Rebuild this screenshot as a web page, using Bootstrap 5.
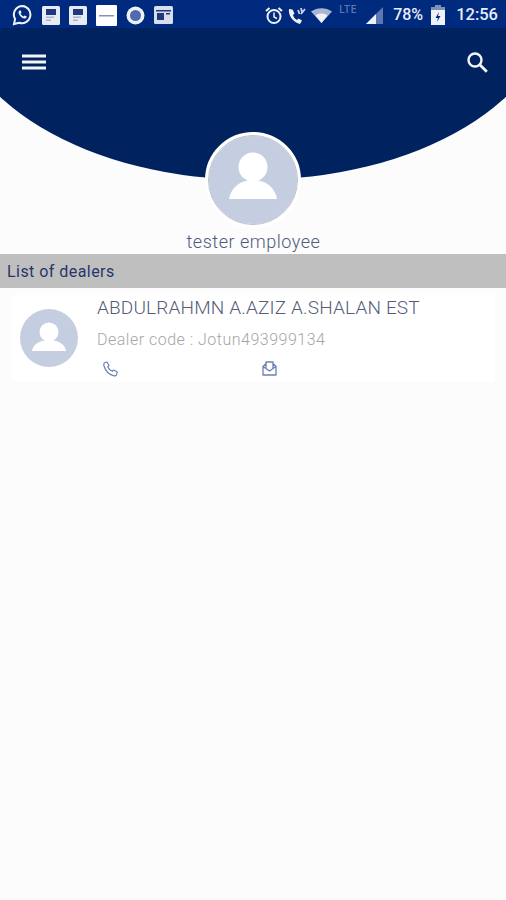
<!DOCTYPE html>
<html lang="en">
<head>
<meta charset="utf-8">
<title>Dealers</title>
<link rel="stylesheet" href="https://cdn.jsdelivr.net/npm/bootstrap@5.3.0/dist/css/bootstrap.min.css">
<style>
html,body{background:#fcfcfc;font-family:Roboto,"Liberation Sans",sans-serif;}
.screen{width:506px;height:900px;overflow:hidden;background:#fcfcfc;}
.hero{height:180px;overflow:hidden;display:grid;grid-template-columns:506px;}
.hero>*{grid-area:1/1;align-self:start;}
.arc{width:600px;height:360px;margin-left:-47px;margin-top:-180px;background:#00225f;border-radius:50%;}
.topbar{height:28px;background:#002a7e;padding:2px 8px 0 12px;color:#e8edf7;}
.topbar svg{display:block;flex:none;}
.sb-left{gap:9px;}
.lte-tag{font-size:10px;font-weight:500;color:#5d78b0;width:22px;margin:-10px 5px 0 7px;letter-spacing:.6px;line-height:12px;}
.sb-pct{font-size:16px;font-weight:500;margin-left:10px;margin-right:8px;}
.sb-time{font-size:16.5px;font-weight:500;margin-left:11px;}
.toolbar{height:68px;padding:0 17px 0 21px;margin-top:28px;}
.avatar-big{width:96px;height:96px;border-radius:50%;background:#c5cee0;border:4px solid #fff;outline:1px solid #b9bfcc;outline-offset:-4px;margin:-48px auto 0;position:relative;overflow:hidden;}
.who{font-size:18px;font-weight:300;line-height:22px;color:#4f5a7c;letter-spacing:.52px;text-align:center;margin-top:3px;height:23px;padding-left:1px;}
.sect{height:34px;background:#bfbfbf;color:#27356c;font-size:16px;line-height:36px;padding-left:7px;letter-spacing:.45px;}
.dealer{margin:7px 11px 0 12px;height:87px;background:#fff;}
.avatar-small{width:58px;height:58px;border-radius:50%;background:#c5cee0;margin:14px 19px 0 8px;flex:none;overflow:hidden;}
.d-name{font-size:19px;font-weight:300;color:#555d78;line-height:24px;margin-top:1px;letter-spacing:.16px;white-space:nowrap;}
.d-code{font-size:16px;font-weight:300;color:#a6a6a6;line-height:22px;margin-top:9px;letter-spacing:.5px;white-space:nowrap;}
.d-icons{margin-top:10px;padding-left:6px;}
.d-icons svg{display:block;}
.gap-ic{width:143px;}
</style>
</head>
<body>
<div class="screen">
  <div class="hero">
    <div class="arc"></div>
    <div class="topbar d-flex align-items-center justify-content-between">
      <div class="d-flex align-items-center sb-left">
        <svg width="21" height="22" viewBox="0 0 21 22"><path d="M10.500 2a8.600 8.600 0 0 0-7.400 13L2 20l5-1.300A8.600 8.600 0 1 0 10.500 2z" fill="none" stroke="#eef1f8" stroke-width="2"/><path d="M7.500 6.500c-1.500 1-1.200 3 .3 5s3.700 3.500 5.400 3c1.200-.4 1.700-1.400 1.500-2l-2.100-1.100-1 1c-1.200-.4-2.600-1.800-3-3l.9-1-1-2.100z" fill="#eef1f8"/></svg>
        <svg width="18" height="19" viewBox="0 0 18 19"><rect width="18" height="19" rx="1.500" fill="#e8ebf3"/><rect x="4" y="3" width="10" height="6" fill="#1f3a7c"/><rect x="4" y="10.500" width="8" height="1.500" fill="#a9b3cc"/><rect x="4" y="13.500" width="5" height="1.500" fill="#a9b3cc"/></svg>
        <svg width="18" height="19" viewBox="0 0 18 19"><rect width="18" height="19" rx="1.500" fill="#e8ebf3"/><rect x="4" y="3" width="10" height="6" fill="#1f3a7c"/><rect x="4" y="10.500" width="8" height="1.500" fill="#a9b3cc"/><rect x="4" y="13.500" width="5" height="1.500" fill="#a9b3cc"/></svg>
        <svg width="21" height="21" viewBox="0 0 21 21"><rect width="21" height="21" rx="1" fill="#fff"/><rect x="3" y="10" width="15" height="1.500" fill="#8493b8"/></svg>
        <svg width="19" height="19" viewBox="0 0 19 19"><circle cx="9.500" cy="9.500" r="9" fill="#eef1f8"/><circle cx="9.500" cy="9.500" r="5.500" fill="#4f6bab"/></svg>
        <svg width="19" height="18" viewBox="0 0 19 18"><rect width="19" height="18" rx="1.500" fill="#d9deea"/><rect x="2" y="4" width="15" height="1.500" fill="#1f3a7c"/><rect x="3" y="7" width="7" height="7" fill="#1f3a7c"/><rect x="12" y="7" width="4" height="1.500" fill="#1f3a7c"/></svg>
      </div>
      <div class="d-flex align-items-center">
        <svg width="18" height="19" viewBox="0 0 18 19"><circle cx="9" cy="10.500" r="6.500" fill="none" stroke="#eef1f8" stroke-width="2"/><path d="M9 6.500V11l3 1.500" fill="none" stroke="#eef1f8" stroke-width="1.500"/><path d="M1 5l3.500-3M17 5l-3.500-3" stroke="#eef1f8" stroke-width="2"/></svg>
        <svg class="ms-1" width="20" height="19" viewBox="0 0 20 19"><path d="M2 3c-1 5 3 13 11 15l2-3.500-3.500-2-1.500 1.500c-2-1-3.500-3-4-5l1.500-1.500L5.500 3.500z" fill="#eef1f8"/><path d="M11 4l1.500 4M14 2l1 4.500M18 3l-4 5" stroke="#c9d2e6" stroke-width="1.800"/></svg>
        <svg class="wifi-ic ms-1" width="21" height="15" viewBox="0 0 21 15"><path d="M0 3.500C6-1 15-1 21 3.500L10.500 15z" fill="#a9b6d2"/><path d="M4.500 7.500c3.600-2.600 8.400-2.600 12 0L10.500 15z" fill="#eef1f8"/></svg>
        <span class="lte-tag">LTE</span>
        <svg width="17" height="17" viewBox="0 0 17 17"><path d="M0 17 17 0v17z" fill="#5d78b0"/><path d="M0 17 10 7v10z" fill="#eef1f8"/></svg>
        <span class="sb-pct">78%</span>
        <svg width="14" height="20" viewBox="0 0 14 20"><path d="M4 0h6v2h4v18H0V2h4z" fill="#7e8fb8"/><path d="M0 5h14v15H0z" fill="#eef1f8"/><path d="M8 7 4.500 13H7l-1 4 3.500-6H7z" fill="#002a7e"/></svg>
        <span class="sb-time">12:56</span>
      </div>
    </div>
    <div class="toolbar d-flex align-items-center justify-content-between">
      <svg width="26" height="20" viewBox="0 0 26 20"><path d="M1 4h24M1 10h24M1 16h24" stroke="#f2f4f9" stroke-width="3"/></svg>
      <svg width="24" height="24" viewBox="0 0 24 24"><circle cx="10" cy="10" r="6.500" fill="none" stroke="#f2f4f9" stroke-width="2.400"/><path d="M14.800 14.800l7 7" stroke="#f2f4f9" stroke-width="2.800"/></svg>
    </div>
  </div>
  <div class="avatar-big">
    <svg width="88" height="88" viewBox="0 0 88 88"><circle cx="44" cy="31" r="14.500" fill="#fff"/><path d="M20 63c2-12 12-19 24-19s22 7 24 19z" fill="#fff"/></svg>
  </div>
  <div class="who">tester employee</div>
  <div class="sect">List of dealers</div>
  <div class="dealer d-flex">
    <div class="avatar-small">
      <svg width="58" height="58" viewBox="0 0 58 58"><circle cx="29" cy="23" r="9.500" fill="#fff"/><path d="M12 42c1-7 8-11 17-11s16 4 17 11z" fill="#fff"/></svg>
    </div>
    <div>
      <div class="d-name">ABDULRAHMN A.AZIZ A.SHALAN EST</div>
      <div class="d-code">Dealer code : Jotun493999134</div>
      <div class="d-icons d-flex">
        <svg width="16" height="16" viewBox="0 0 16 16"><path d="M1.500 1.800 4 1l2 3.500-1.300 1.300c.8 2 2.500 3.700 4.500 4.500L10.500 9l3.800 2-.8 2.700c-.4 1-1.800 1.300-3 1C6 13.500 2.500 10 1 5c-.3-1.300-.2-2.600.5-3.200z" fill="none" stroke="#6d80b0" stroke-width="1.200" stroke-linejoin="round"/></svg>
        <div class="gap-ic"></div>
        <svg width="15" height="15" viewBox="0 0 15 15"><path d="M1 5.500 4 2.500V1h7v1.500l3 3V14H1zM1 5.500 7.500 10 14 5.500M4 2.500v4.500M11 2.500v4.500" fill="none" stroke="#6d80b0" stroke-width="1.300" stroke-linejoin="round"/></svg>
      </div>
    </div>
  </div>
</div>
</body>
</html>
